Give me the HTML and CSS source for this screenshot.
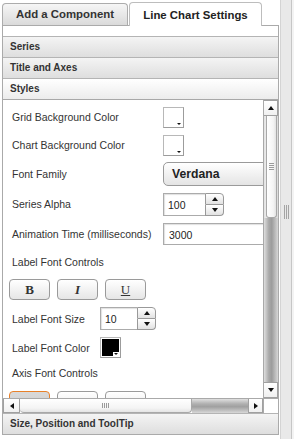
FILE: index.html
```html
<!DOCTYPE html>
<html>
<head>
<meta charset="utf-8">
<link rel="stylesheet" href="styles.css">
</head>
<body>
<div class="app">
  <div class="main">
    <div class="tabs">
      <div class="tab">Add a Component</div>
      <div class="tab active">Line Chart Settings</div>
    </div>
    <div class="panel">
      <div class="acc-head first">Series</div>
      <div class="acc-head">Title and Axes</div>
      <div class="acc-head open">Styles</div>
      <div class="acc-body">
        <div class="viewport">
          <div class="form">
            <div class="row r28">
              <span class="label">Grid Background Color</span>
              <span class="swatch"></span>
            </div>
            <div class="row r28">
              <span class="label">Chart Background Color</span>
              <span class="swatch"></span>
            </div>
            <div class="row">
              <span class="label">Font Family</span>
              <span class="select">Verdana</span>
            </div>
            <div class="row">
              <span class="label">Series Alpha</span>
              <span class="spin">
                <span class="spin-input">100</span>
                <span class="spin-btns"><span class="spin-up"><i class="tri-up"></i></span><span class="spin-down"><i class="tri-down"></i></span></span>
              </span>
            </div>
            <div class="row">
              <span class="label">Animation Time (milliseconds)</span>
              <span class="text-input">3000</span>
            </div>
            <div class="row r26">
              <span class="label">Label Font Controls</span>
            </div>
            <div class="row r29">
              <div class="btns">
                <span class="fbtn"><b>B</b></span>
                <span class="fbtn"><b><i>I</i></b></span>
                <span class="fbtn"><u>U</u></span>
              </div>
            </div>
            <div class="row r29">
              <span class="label narrow">Label Font Size</span>
              <span class="spin small">
                <span class="spin-input">10</span>
                <span class="spin-btns"><span class="spin-up"><i class="tri-up"></i></span><span class="spin-down"><i class="tri-down"></i></span></span>
              </span>
            </div>
            <div class="row r29">
              <span class="label narrow">Label Font Color</span>
              <span class="swatch black"></span>
            </div>
            <div class="row r22">
              <span class="label">Axis Font Controls</span>
            </div>
            <div class="row r29 top">
              <div class="btns">
                <span class="fbtn focus"><b>B</b></span>
                <span class="fbtn"><b><i>I</i></b></span>
                <span class="fbtn"><u>U</u></span>
              </div>
            </div>
          </div>
        </div>
        <div class="vscroll">
          <span class="sb-btn v"><i class="tri-up"></i></span>
          <span class="vthumb"><span class="grip-h"></span></span>
          <span class="vtrack"></span>
          <span class="sb-btn v"><i class="tri-down"></i></span>
        </div>
        <div class="hscroll">
          <span class="sb-btn h"><i class="tri-left"></i></span>
          <span class="hthumb"><span class="grip-v"></span></span>
          <span class="htrack"></span>
          <span class="sb-btn h"><i class="tri-right"></i></span>
        </div>
        <div class="corner"></div>
      </div>
      <div class="acc-head">Size, Position and ToolTip</div>
    </div>
  </div>
  <div class="splitter"><span class="split-grip"></span></div>
</div>
</body>
</html>
```
FILE: styles.css
```css
html, body {
  margin: 0;
  padding: 0;
}
body {
  width: 294px;
  height: 439px;
  overflow: hidden;
  background: #fff;
  font-family: "Liberation Sans", Arial, sans-serif;
  color: #333;
}
.app {
  display: flex;
  height: 439px;
}
.main {
  width: 280px;
  flex: none;
  box-sizing: border-box;
  padding: 2px 0 0 2px;
}
.tabs {
  display: flex;
  gap: 1px;
  height: 23px;
  position: relative;
  z-index: 1;
}
.tab {
  box-sizing: border-box;
  width: 126px;
  height: 22px;
  margin-top: 1px;
  border: 1px solid #acacac;
  border-bottom: none;
  border-radius: 4px 4px 0 0;
  background: linear-gradient(#f6f6f6, #dadada);
  font-weight: bold;
  font-size: 11.4px;
  line-height: 21px;
  text-align: center;
  color: #333;
}
.tab.active {
  width: 133px;
  height: 24px;
  margin-top: 0;
  background: #fff;
  border-color: #bdbdbd;
  line-height: 24px;
  color: #222;
}
.panel {
  box-sizing: border-box;
  width: 277px;
  border: 1px solid #aaa;
  padding-top: 10px;
  background: #fff;
}
.acc-head {
  height: 20px;
  border-top: 1px solid #b4b4b4;
  background: linear-gradient(#f4f4f4, #dedede);
  font-size: 10px;
  font-weight: bold;
  line-height: 20px;
  padding-left: 7px;
  color: #333;
}
.acc-head.open {
  background: linear-gradient(#ffffff, #ececec);
}
.acc-body {
  border-top: 1px solid #a8a8a8;
  display: grid;
  grid-template-columns: 260px 15px;
  grid-template-rows: 298px 15px;
}
.viewport {
  overflow: hidden;
  position: relative;
}
.form {
  padding: 3px 0 0 9px;
}
.row {
  display: flex;
  align-items: center;
  height: 30px;
}
.row.r28 { height: 28px; }
.row.r26 { height: 26px; }
.row.r29 { height: 29px; }
.row.r22 { height: 22px; }
.row.top { align-items: flex-start; padding-top: 7px; box-sizing: border-box; }
.label {
  flex: none;
  width: 151px;
  font-size: 10.5px;
  color: #333;
  white-space: nowrap;
}
.label.narrow { width: 88px; }

.swatch {
  flex: none;
  position: relative;
  box-sizing: border-box;
  width: 21px;
  height: 21px;
  border: 1px solid #9c9c9c;
  border-left-color: #b8b8b8;
  border-top-color: #b8b8b8;
  background: #fff;
}
.swatch::after {
  content: "";
  position: absolute;
  right: 2px;
  bottom: 2px;
  border-left: 2px solid transparent;
  border-right: 2px solid transparent;
  border-top: 2px solid #111;
}
.swatch.black {
  background: #000;
  box-shadow: inset 0 0 0 1px #fff;
}
.swatch.black::before {
  content: "";
  position: absolute;
  right: 1px;
  bottom: 1px;
  width: 6px;
  height: 4px;
  background: #fff;
}

.select {
  flex: none;
  box-sizing: border-box;
  width: 130px;
  height: 24px;
  border: 1px solid #9a9a9a;
  border-radius: 5px;
  background: linear-gradient(#ffffff, #e4e4e4);
  font-size: 12.2px;
  font-weight: bold;
  line-height: 22px;
  padding-left: 8px;
  color: #222;
}

.spin {
  display: flex;
  flex: none;
  height: 23px;
}
.spin-input {
  box-sizing: border-box;
  width: 42px;
  height: 23px;
  border: 1px solid #ababab;
  border-right: none;
  box-shadow: inset 1px 1px 1px #e0e0e0;
  background: #fff;
  font-size: 10.5px;
  line-height: 23px;
  padding-left: 4px;
  color: #222;
}
.spin.small .spin-input { width: 37px; }
.spin-btns {
  display: flex;
  flex-direction: column;
  width: 19px;
}
.spin-up, .spin-down {
  box-sizing: border-box;
  height: 12px;
  border: 1px solid #999;
  background: linear-gradient(#ffffff, #e2e2e2);
  display: flex;
  align-items: center;
  justify-content: center;
}
.spin-up { border-radius: 0 4px 0 0; }
.spin-down { height: 11px; border-top: none; border-radius: 0 0 4px 0; }

.tri-up, .tri-down, .tri-left, .tri-right {
  display: block;
  width: 0;
  height: 0;
}
.tri-up {
  border-left: 3.5px solid transparent;
  border-right: 3.5px solid transparent;
  border-bottom: 4px solid #111;
}
.tri-down {
  border-left: 3.5px solid transparent;
  border-right: 3.5px solid transparent;
  border-top: 4px solid #111;
}
.tri-left {
  border-top: 3.5px solid transparent;
  border-bottom: 3.5px solid transparent;
  border-right: 4px solid #111;
}
.tri-right {
  border-top: 3.5px solid transparent;
  border-bottom: 3.5px solid transparent;
  border-left: 4px solid #111;
}

.text-input {
  flex: none;
  box-sizing: border-box;
  width: 130px;
  height: 22px;
  border: 1px solid #ababab;
  box-shadow: inset 1px 1px 1px #e0e0e0;
  font-size: 10.5px;
  line-height: 22px;
  padding-left: 5px;
  color: #222;
}

.btns {
  display: flex;
  gap: 7px;
  margin-left: -3px;
}
.fbtn {
  box-sizing: border-box;
  width: 41px;
  height: 21px;
  border: 1px solid #9a9a9a;
  border-radius: 4px;
  background: linear-gradient(#ffffff, #e6e6e6);
  font-family: "Liberation Serif", "Times New Roman", serif;
  font-size: 13px;
  line-height: 19px;
  text-align: center;
  color: #333;
}
.fbtn.focus {
  border-color: #e8812a;
  background: linear-gradient(#d9d9d9, #cfcfcf);
}

.vscroll {
  display: flex;
  flex-direction: column;
  border-left: 1px solid #a9a9a9;
  background: linear-gradient(to right, #e2e2e2, #f5f5f5 30%, #f5f5f5 80%, #d8d8d8);
}
.sb-btn {
  box-sizing: border-box;
  display: flex;
  align-items: center;
  justify-content: center;
  background: linear-gradient(#ffffff, #f0f0f0);
  border: 1px solid #a0a0a0;
  flex: none;
}
.sb-btn.v {
  height: 16px;
  border-left: none;
}
.vthumb {
  box-sizing: border-box;
  height: 102px;
  margin: 0 1px 0 2px;
  border: 1px solid #a8a8a8;
  border-top: none;
  border-radius: 0 0 3px 3px;
  background: linear-gradient(to right, #ffffff, #f4f4f4 70%, #e2e2e2);
  display: flex;
  align-items: center;
  justify-content: center;
  flex: none;
}
.grip-h {
  width: 5px;
  height: 7px;
  background: repeating-linear-gradient(#9a9a9a 0 1px, transparent 1px 2px);
}
.vtrack {
  flex: 1;
  background: linear-gradient(to right, #dedede, #a9a9a9 35%, #9c9c9c 55%, #c2c2c2 85%, #d6d6d6);
}

.hscroll {
  display: flex;
  border-top: 1px solid #a9a9a9;
}
.sb-btn.h {
  width: 17px;
  border-top: none;
}
.sb-btn.h:last-child {
  width: 15px;
}
.hthumb {
  box-sizing: border-box;
  width: 172px;
  height: 14px;
  border: 1px solid #a8a8a8;
  border-top: none;
  border-left: none;
  border-radius: 0 0 4px 4px;
  background: linear-gradient(#ffffff, #f4f4f4 70%, #e4e4e4);
  display: flex;
  align-items: center;
  justify-content: center;
  flex: none;
}
.grip-v {
  width: 7px;
  height: 5px;
  background: repeating-linear-gradient(to right, #9a9a9a 0 1px, transparent 1px 2px);
}
.htrack {
  flex: 1;
  background: linear-gradient(#e0e0e0, #b0b0b0 35%, #a0a0a0 55%, #c4c4c4 85%, #d8d8d8);
}
.corner {
  background: #fff;
  border-top: 1px solid #a9a9a9;
  border-left: 1px solid #a9a9a9;
}

.splitter {
  flex: 1;
  position: relative;
  background: linear-gradient(to right, #e9e9e9 0 10px, #c6c6c6 10px 11px, #f3f3f3 11px);
  border-left: 1px solid #d4d4d4;
}
.split-grip {
  position: absolute;
  left: 3px;
  top: 205px;
  width: 5px;
  height: 14px;
  background: repeating-linear-gradient(to right, #a4a4a4 0 1px, transparent 1px 2px);
}
```
